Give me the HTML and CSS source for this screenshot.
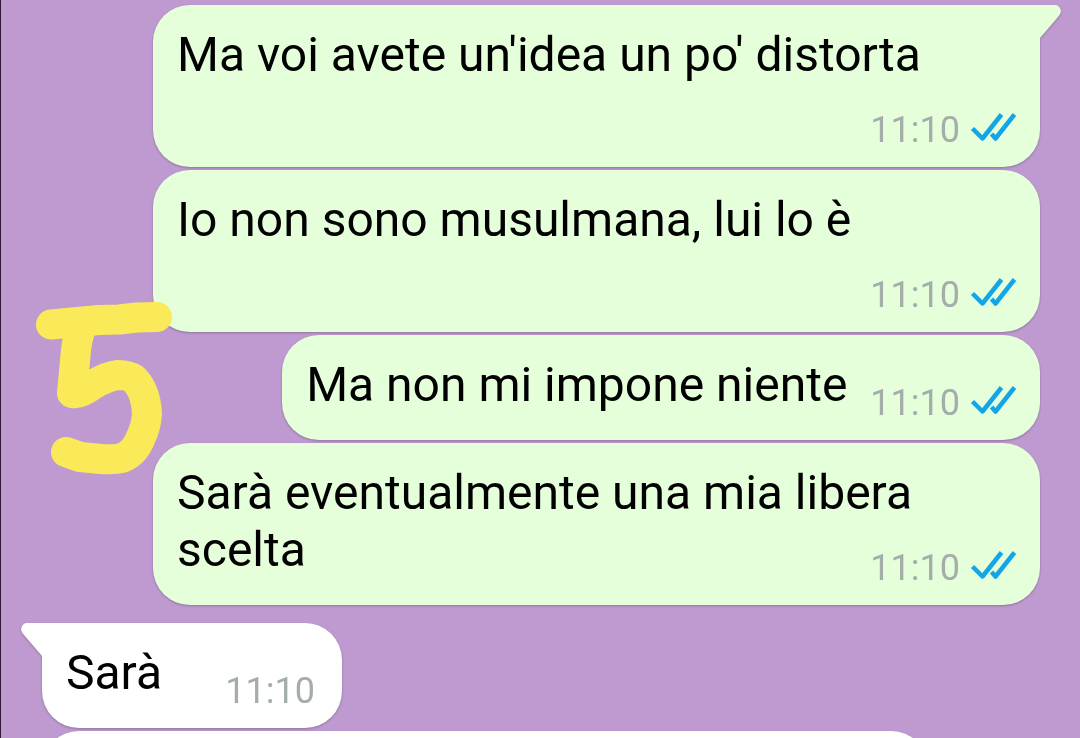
FILE: index.html
```html
<!DOCTYPE html>
<html lang="it">
<head>
<meta charset="UTF-8">
<meta name="viewport" content="width=device-width, initial-scale=1.0">
<title>Chat</title>
<link rel="stylesheet" href="styles.css">
</head>
<body>

<svg class="symbols" aria-hidden="true">
    <symbol id="ticks" viewBox="0 0 46 32">
        <path d="M2.500 17.500L12.500 27.500L31.500 3.500M21.500 23L25.500 27.500L44.500 3.500" fill="none" stroke="#12a5e8" stroke-width="4.500" stroke-linejoin="round"/>
    </symbol>
</svg>

<main class="chat">
    <div class="message sent first">
        <svg class="tail" viewBox="0 0 22 34" aria-hidden="true"><path d="M0 0H17Q21 1 22 6Q22 9 19 12L1 33H0Z" fill="#e5ffdb"/></svg>
        <span class="text">Ma voi avete un'idea un po' distorta</span>
        <span class="meta"><time>11:10</time><svg class="ticks" aria-hidden="true"><use href="#ticks"/></svg></span>
    </div>
    <div class="message sent">
        <span class="text">Io non sono musulmana, lui lo è</span>
        <span class="meta"><time>11:10</time><svg class="ticks" aria-hidden="true"><use href="#ticks"/></svg></span>
    </div>
    <div class="message sent">
        <span class="text">Ma non mi impone niente</span>
        <span class="meta"><time>11:10</time><svg class="ticks" aria-hidden="true"><use href="#ticks"/></svg></span>
    </div>
    <div class="message sent">
        <span class="text">Sarà eventualmente una mia libera scelta</span>
        <span class="meta"><time>11:10</time><svg class="ticks" aria-hidden="true"><use href="#ticks"/></svg></span>
    </div>
    <div class="message received first">
        <svg class="tail" viewBox="0 0 22 34" aria-hidden="true"><path d="M22 0H5Q1 1 0 6Q0 9 3 12L21 33H22Z" fill="#fff"/></svg>
        <span class="text">Sarà</span>
        <span class="meta"><time>11:10</time></span>
    </div>
    <div class="message received long"></div>

    <!-- number drawn by hand over the chat -->
    <svg class="marker" viewBox="0 0 140 175" aria-hidden="true">
        <g fill="none" stroke="#faea5a" stroke-width="30" stroke-linecap="round" stroke-linejoin="round">
            <path d="M17 24.500L65 20L85 19.500L103 17.500L123 17"/>
            <path d="M48 25L46 31Q43 40 42 50L38 93L44 92Q50 90 58 85Q74 76 84 75Q94 75 100 79Q112 91 113 114Q112 127 107 137Q101 153 88 158Q80 160 67 159L46 157L32 152"/>
            <path d="M39 93Q46 95 60 84"/>
        </g>
    </svg>
</main>

</body>
</html>
```

FILE: styles.css
```css
* {
    box-sizing: border-box;
}

body {
    margin: 0;
    background-color: #be9ad0;
    font-family: Roboto, "Noto Sans", sans-serif;
    color: #000;
}

.symbols {
    display: none;
}

.chat {
    position: relative;
    display: flex;
    flex-direction: column;
    gap: 3px;
    height: 100vh;
    overflow: hidden;
    padding: 5px 40px 0 41px;
    border-left: 1px solid #301838;
}

.message {
    position: relative;
    display: flow-root;
    flex-shrink: 0;
    padding: 21px 24px 16px;
    border-radius: 37px;
    filter: drop-shadow(0 1px 1px rgba(0, 0, 0, 0.25));
    font-size: 48px;
    line-height: 57px;
}

.sent {
    align-self: flex-end;
    margin-left: 111px;
    background-color: #e5ffdb;
}

.received {
    align-self: flex-start;
    min-width: 300px;
    padding-right: 27px;
    background-color: #fff;
}

.sent.first {
    border-top-right-radius: 0;
}

.received.first {
    margin-top: 15px;
    border-top-left-radius: 0;
}

.long {
    width: 100%;
    max-width: 886px;
    min-height: 105px;
}

/* overlaps the bubble by 1px so no seam shows */
.tail {
    position: absolute;
    top: 0;
    width: 22px;
    height: 34px;
}

.sent .tail {
    right: -21px;
}

.received .tail {
    left: -21px;
}

.meta {
    float: right;
    display: flex;
    gap: 10px;
    margin: 26px 0 0 23px;
    font-size: 36px;
    line-height: 42px;
    color: #a5adaa;
}

.ticks {
    width: 46px;
    height: 32px;
    margin-top: 2px;
}

/* hand-drawn marker */
.marker {
    position: absolute;
    top: 300px;
    left: 33px;
    width: 140px;
    height: 175px;
}
```
